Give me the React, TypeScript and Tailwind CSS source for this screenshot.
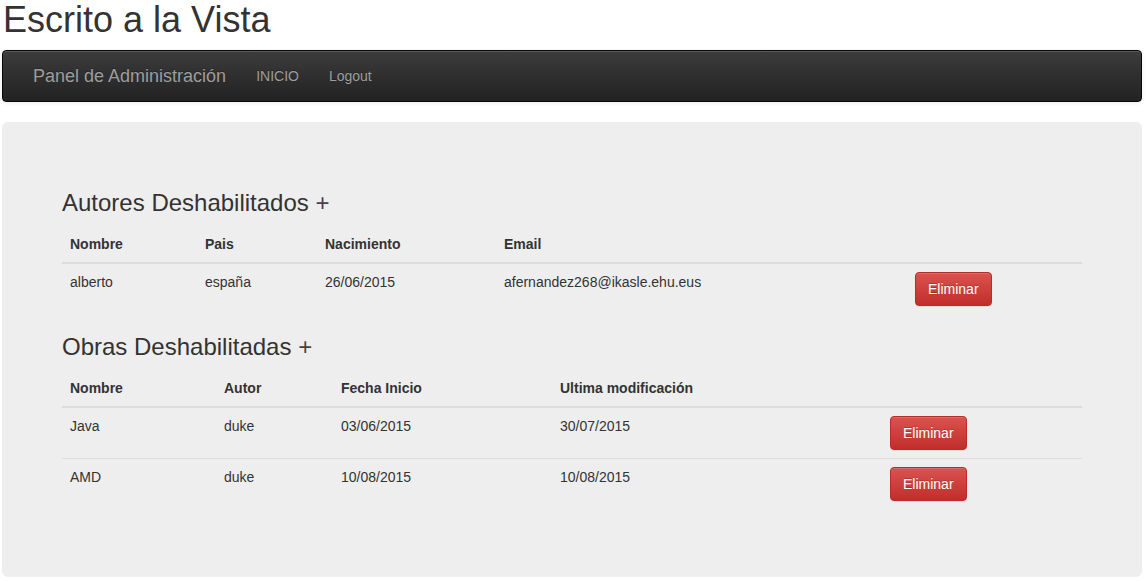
const autores = [
  { nombre: "alberto", pais: "españa", nacimiento: "26/06/2015", email: "afernandez268@ikasle.ehu.eus" },
];

const obras = [
  { nombre: "Java", autor: "duke", inicio: "03/06/2015", modificacion: "30/07/2015" },
  { nombre: "AMD", autor: "duke", inicio: "10/08/2015", modificacion: "10/08/2015" },
];

function DangerButton() {
  return (
    <button
      type="button"
      className="rounded-[4px] border border-[#b92c28] bg-[linear-gradient(to_bottom,#d9534f_0,#c12e2a_100%)] px-3 py-[6px] text-[14px] leading-5 text-white shadow-[inset_0_1px_0_rgba(255,255,255,.15),0_1px_1px_rgba(0,0,0,.075)] [text-shadow:0_-1px_0_rgba(0,0,0,.2)]"
    >
      Eliminar
    </button>
  );
}

function Heading({ children }: { children: React.ReactNode }) {
  return (
    <h3 className="mb-[10px] mt-5 text-[24px] font-normal leading-[1.1] text-[#333]">
      {children} <span className="font-light text-[#444]">+</span>
    </h3>
  );
}

const th = "border-b-2 border-[#ddd] p-2 text-left align-bottom font-bold";
const td = "border-t border-[#ddd] p-2 align-top";

export default function App() {
  return (
    <div className="min-h-screen bg-white font-['Liberation_Sans',Arial,sans-serif] text-[14px] leading-5 text-[#333]">
      <div className="ml-[2px] w-[1140px]">
        <h1 className="mb-[10px] mt-0 pl-[1px] text-[36px] font-normal leading-[1.1] text-[#333]">Escrito a la Vista</h1>

        <nav className="mb-5 flex h-[52px] items-center rounded-[4px] border border-[#080808] bg-[linear-gradient(to_bottom,#3c3c3c_0,#222_100%)] px-[15px] shadow-[inset_0_1px_0_rgba(255,255,255,.15),0_1px_5px_rgba(0,0,0,.075)]">
          <a className="px-[15px] py-[15px] text-[18px] leading-5 text-[#9d9d9d] [text-shadow:0_-1px_0_rgba(0,0,0,.25)]">
            Panel de Administración
          </a>
          <a className="px-[15px] py-[15px] text-[14px] leading-5 text-[#9d9d9d] [text-shadow:0_-1px_0_rgba(0,0,0,.25)]">INICIO</a>
          <a className="px-[15px] py-[15px] text-[14px] leading-5 text-[#9d9d9d] [text-shadow:0_-1px_0_rgba(0,0,0,.25)]">Logout</a>
        </nav>

        <div className="rounded-[6px] bg-[#eee] px-[60px] pb-[48px] pt-[48px]">
          <Heading>Autores Deshabilitados</Heading>
          <table className="mb-5 w-full">
            <thead>
              <tr>
                <th className={`${th} w-[135px]`}>Nombre</th>
                <th className={`${th} w-[120px]`}>Pais</th>
                <th className={`${th} w-[179px]`}>Nacimiento</th>
                <th className={`${th} w-[411px]`}>Email</th>
                <th className={th}></th>
              </tr>
            </thead>
            <tbody>
              {autores.map((a) => (
                <tr key={a.email}>
                  <td className={td}>{a.nombre}</td>
                  <td className={td}>{a.pais}</td>
                  <td className={td}>{a.nacimiento}</td>
                  <td className={td}>{a.email}</td>
                  <td className={td}>
                    <DangerButton />
                  </td>
                </tr>
              ))}
            </tbody>
          </table>

          <Heading>Obras Deshabilitadas</Heading>
          <table className="mb-5 w-full">
            <thead>
              <tr>
                <th className={`${th} w-[154px]`}>Nombre</th>
                <th className={`${th} w-[117px]`}>Autor</th>
                <th className={`${th} w-[219px]`}>Fecha Inicio</th>
                <th className={`${th} w-[330px]`}>Ultima modificación</th>
                <th className={th}></th>
              </tr>
            </thead>
            <tbody>
              {obras.map((o) => (
                <tr key={o.nombre}>
                  <td className={td}>{o.nombre}</td>
                  <td className={td}>{o.autor}</td>
                  <td className={td}>{o.inicio}</td>
                  <td className={td}>{o.modificacion}</td>
                  <td className={td}>
                    <DangerButton />
                  </td>
                </tr>
              ))}
            </tbody>
          </table>
        </div>
      </div>
    </div>
  );
}
